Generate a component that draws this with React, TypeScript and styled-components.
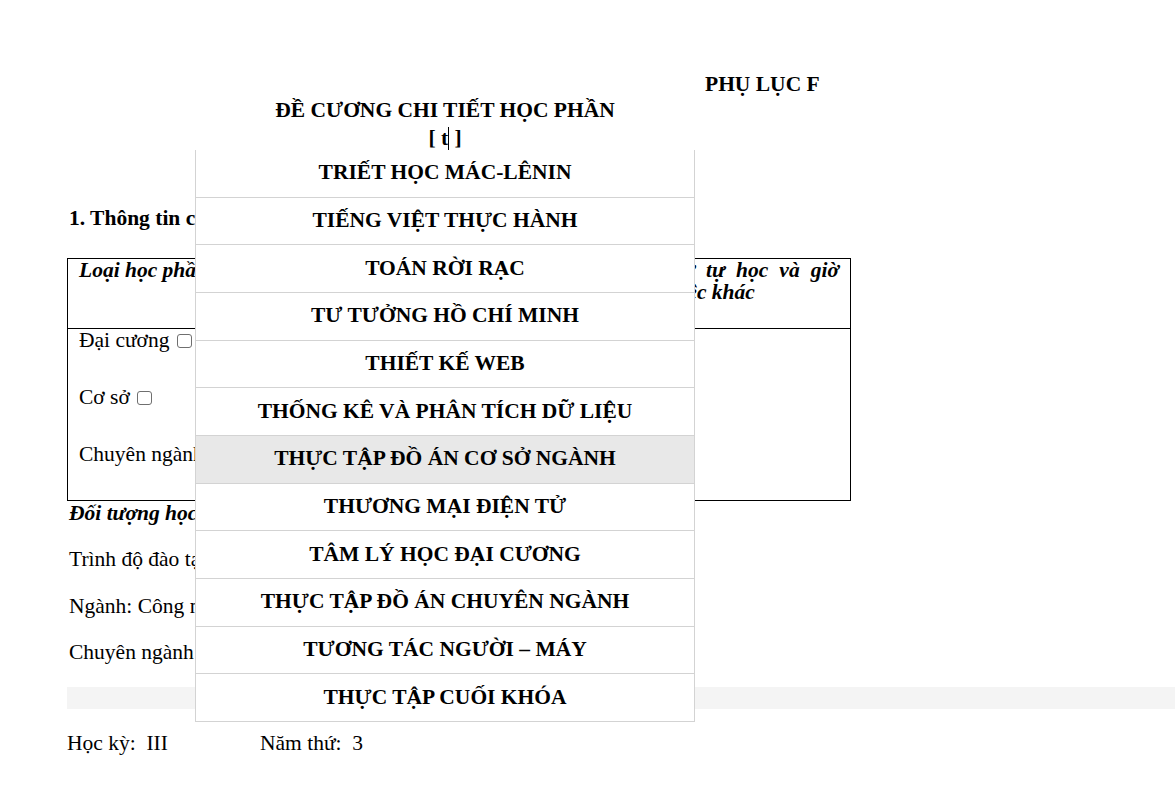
import React from "react";
import styled, { createGlobalStyle, css } from "styled-components";

const GlobalStyle = createGlobalStyle`
  html, body {
    margin: 0;
    padding: 0;
    background: #fff;
  }
  body {
    font-family: "Liberation Serif", "Times New Roman", serif;
    color: #000;
    overflow-x: hidden;
  }
`;

const subjects = [
  "TRIẾT HỌC MÁC-LÊNIN",
  "TIẾNG VIỆT THỰC HÀNH",
  "TOÁN RỜI RẠC",
  "TƯ TƯỞNG HỒ CHÍ MINH",
  "THIẾT KẾ WEB",
  "THỐNG KÊ VÀ PHÂN TÍCH DỮ LIỆU",
  "THỰC TẬP ĐỒ ÁN CƠ SỞ NGÀNH",
  "THƯƠNG MẠI ĐIỆN TỬ",
  "TÂM LÝ HỌC ĐẠI CƯƠNG",
  "THỰC TẬP ĐỒ ÁN CHUYÊN NGÀNH",
  "TƯƠNG TÁC NGƯỜI – MÁY",
  "THỰC TẬP CUỐI KHÓA",
];

const App: React.FunctionComponent = () => {
  return (
    <>
      <GlobalStyle />
      <Page>
        <Appendix>PHỤ LỤC F</Appendix>
        <TitleBlock>
          <div>ĐỀ CƯƠNG CHI TIẾT HỌC PHẦN</div>
          <InputLine>
            [ t<Caret /> ]
            <Dropdown>
              {subjects.map((s, i) => (
                <Option key={s} $active={i === 6}>
                  {s}
                </Option>
              ))}
            </Dropdown>
          </InputLine>
        </TitleBlock>

        <SectionHeading>1. Thông tin chung về học phần</SectionHeading>

        <InfoTable>
          <colgroup>
            <col style={{ width: 170 }} />
            <col style={{ width: 128 }} />
            <col style={{ width: 128 }} />
            <col style={{ width: 128 }} />
            <col style={{ width: 229 }} />
          </colgroup>
          <tbody>
            <HeadRow>
              <HeadCell>Loại học phần</HeadCell>
              <HeadCell>Số tín chỉ</HeadCell>
              <HeadCell>Số tiết lý thuyết</HeadCell>
              <HeadCell>Số tiết thực hành</HeadCell>
              <HeadCell $justify>Số giờ tự học và giờ làm việc khác</HeadCell>
            </HeadRow>
            <BodyRow>
              <BodyCell>
                <TypeLine>
                  Đại cương <Check />
                </TypeLine>
                <TypeLine>
                  Cơ sở <Check />
                </TypeLine>
                <TypeLine>
                  Chuyên ngành <Check />
                </TypeLine>
              </BodyCell>
              <BodyCell />
              <BodyCell />
              <BodyCell />
              <BodyCell />
            </BodyRow>
          </tbody>
        </InfoTable>

        <Para $strong>Đối tượng học phần:</Para>
        <Para>Trình độ đào tạo: Đại học</Para>
        <Para>Ngành: Công nghệ thông tin</Para>
        <Para>Chuyên ngành: Kỹ thuật phần mềm</Para>

        <GrayBar />

        <TermRow>
          <TermItem $width={193}>Học kỳ:&nbsp; III</TermItem>
          <TermItem>Năm thứ:&nbsp; 3</TermItem>
        </TermRow>
      </Page>
    </>
  );
};

export default App;

const Page = styled.div`
  padding: 70px 0 40px 67px;
  font-size: 21.5px;
`;

const Appendix = styled.div`
  margin-left: 638px;
  font-weight: bold;
  line-height: 28px;
`;

const TitleBlock = styled.div`
  width: 500px;
  margin-top: -2px;
  margin-left: 128px;
  text-align: center;
  font-weight: bold;
  line-height: 28px;
`;

const InputLine = styled.div`
  position: relative;
`;

const Caret = styled.span`
  display: inline-block;
  width: 1px;
  height: 23px;
  background: #000;
  vertical-align: -5px;
`;

const Dropdown = styled.ul`
  position: absolute;
  top: 26px;
  left: 0;
  z-index: 10;
  width: 500px;
  box-sizing: border-box;
  margin: 0;
  padding: 0;
  list-style: none;
  background: #fff;
  border-left: 1px solid #d3d3d3;
  border-right: 1px solid #d3d3d3;
`;

const Option = styled("li").withConfig({
  shouldForwardProp: (prop) => !["$active"].includes(prop),
})<{ $active?: boolean }>`
  height: 47.67px;
  box-sizing: border-box;
  border-bottom: 1px solid #d3d3d3;
  display: flex;
  align-items: center;
  justify-content: center;
  font-weight: bold;
  line-height: 24px;
  padding-bottom: 2px;
  background: #fff;
  ${({ $active }) =>
    $active &&
    css`
      background: #e8e8e8;
    `}
`;

const SectionHeading = styled.div`
  margin-top: 54px;
  padding-left: 2px;
  font-weight: bold;
  line-height: 24px;
`;

const InfoTable = styled.table`
  margin-top: 28px;
  width: 783px;
  table-layout: fixed;
  border-collapse: collapse;
  border: 1px solid #000;
`;

const HeadRow = styled.tr`
  height: 70px;
`;

const HeadCell = styled("td").withConfig({
  shouldForwardProp: (prop) => !["$justify"].includes(prop),
})<{ $justify?: boolean }>`
  border: 1px solid #000;
  padding: 0 11px;
  vertical-align: top;
  font-weight: bold;
  font-style: italic;
  line-height: 22px;
  text-align: ${({ $justify }) => ($justify ? "justify" : "left")};
`;

const BodyRow = styled.tr`
  height: 167px;
`;

const BodyCell = styled.td`
  border: 1px solid #000;
  padding: 0 11px;
  vertical-align: top;
`;

const TypeLine = styled.p`
  margin: 0 0 34px;
  line-height: 23px;
  white-space: nowrap;
`;

// plain box drawn like the browser's unchecked checkbox
const Check = styled.span`
  display: inline-block;
  box-sizing: border-box;
  width: 15px;
  height: 14px;
  margin-left: 2px;
  border: 1px solid #6f6f6f;
  border-radius: 3px;
  background: #fff;
  vertical-align: -1px;
`;

const Para = styled("p").withConfig({
  shouldForwardProp: (prop) => !["$strong"].includes(prop),
})<{ $strong?: boolean }>`
  margin: 0 0 22.4px 2px;
  line-height: 24px;
  ${({ $strong }) =>
    $strong &&
    css`
      font-weight: bold;
      font-style: italic;
    `}
`;

const GrayBar = styled.div`
  height: 22px;
  background: #f4f4f4;
`;

const TermRow = styled.div`
  display: flex;
  margin-top: 22.33px;
  line-height: 24px;
`;

const TermItem = styled("div").withConfig({
  shouldForwardProp: (prop) => !["$width"].includes(prop),
})<{ $width?: number }>`
  width: ${({ $width }) => ($width ? `${$width}px` : "auto")};
`;
